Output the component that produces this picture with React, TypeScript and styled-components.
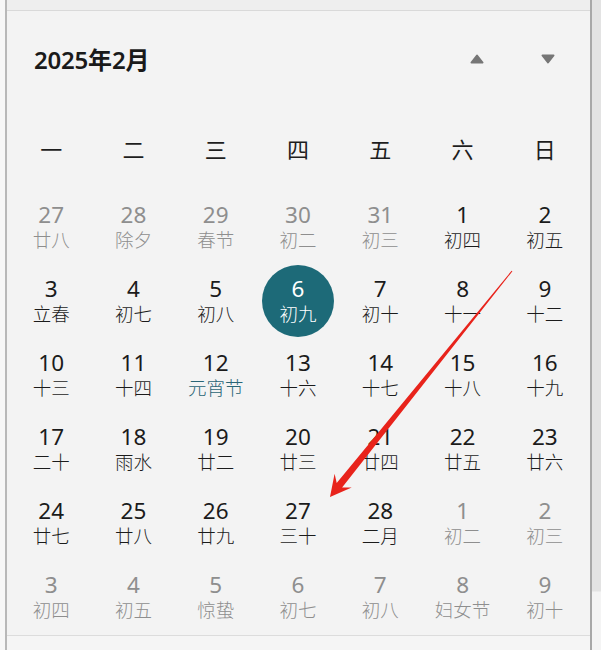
import React from "react";
import styled, { createGlobalStyle } from "styled-components";

const Global = createGlobalStyle`
  html, body { margin: 0; padding: 0; background: #f8f8f8; }
  body { font-family: "Noto Sans", "Noto Sans CJK SC", sans-serif; }
`;

const Page = styled.div`
  position: relative;
  width: 601px;
  height: 650px;
  display: flex;
  overflow: hidden;
`;

const Gutter = styled.div`
  width: 5px;
  flex: none;
  background: #f7f7f7;
`;

const Shade = styled.div`
  width: 9px;
  flex: none;
  background: linear-gradient(to bottom, #e3e3e3 0, #e3e3e3 591px, #f4f4f4 592px);
`;

const Panel = styled.div`
  width: 583px;
  flex: none;
  border-left: 2px solid #b8b8b8;
  border-right: 2px solid #a8a8a8;
  background: #f3f3f3;
  display: flex;
  flex-direction: column;
`;

const TopStrip = styled.div`
  height: 10px;
  background: #eeeeee;
  border-bottom: 1px solid #d9d9d9;
`;

const Header = styled.div`
  height: 95px;
  display: flex;
  align-items: center;
  padding-left: 27px;
`;

const Title = styled.div`
  font-size: 24px;
  font-weight: 600;
  color: #1a1a1a;
  flex: 1;
  letter-spacing: -0.2px;
`;

const NavButton = styled.div<{ $mr: number }>`
  width: 14px;
  height: 10px;
  margin-right: ${(p) => p.$mr}px;
  display: flex;
`;

const Grid = styled.div`
  display: grid;
  grid-template-columns: repeat(7, 1fr);
  width: 576px;
  margin-left: 3px;
`;

const WeekCell = styled.div`
  height: 84px;
  display: flex;
  align-items: center;
  justify-content: center;
  font-size: 22px;
  color: #1e1e1e;
`;

const DayCell = styled.div`
  height: 74px;
  display: flex;
  align-items: center;
  justify-content: center;
`;

const Day = styled.div<{ $tone: "cur" | "other" | "sel" }>`
  width: 72px;
  height: 72px;
  border-radius: 50%;
  display: flex;
  flex-direction: column;
  align-items: center;
  justify-content: center;
  background: ${(p) => (p.$tone === "sel" ? "#1d6a78" : "transparent")};
  color: ${(p) =>
    p.$tone === "sel" ? "#ffffff" : p.$tone === "other" ? "#8e8e8e" : "#1b1b1b"};
`;

const Num = styled.div`
  font-size: 22.5px;
  line-height: 25px;
  height: 25px;
`;

const Lunar = styled.div<{ $fest?: boolean }>`
  font-size: 18.5px;
  line-height: 25px;
  height: 25px;
  font-weight: 300;
  color: ${(p) => (p.$fest ? "#2a6576" : "inherit")};
`;

const BottomLine = styled.div`
  margin-top: 1px;
  border-top: 1px solid #dcdcdc;
  flex: 1;
  background: #f5f5f5;
`;

const ArrowLayer = styled.svg`
  position: absolute;
  left: 0;
  top: 0;
  pointer-events: none;
`;

type D = [string, string, number?];
// flag: 0 current, 1 other month, 2 selected, 3 festival
const rows: D[][] = [
  [["27", "廿八", 1], ["28", "除夕", 1], ["29", "春节", 1], ["30", "初二", 1], ["31", "初三", 1], ["1", "初四"], ["2", "初五"]],
  [["3", "立春"], ["4", "初七"], ["5", "初八"], ["6", "初九", 2], ["7", "初十"], ["8", "十一"], ["9", "十二"]],
  [["10", "十三"], ["11", "十四"], ["12", "元宵节", 3], ["13", "十六"], ["14", "十七"], ["15", "十八"], ["16", "十九"]],
  [["17", "二十"], ["18", "雨水"], ["19", "廿二"], ["20", "廿三"], ["21", "廿四"], ["22", "廿五"], ["23", "廿六"]],
  [["24", "廿七"], ["25", "廿八"], ["26", "廿九"], ["27", "三十"], ["28", "二月"], ["1", "初二", 1], ["2", "初三", 1]],
  [["3", "初四", 1], ["4", "初五", 1], ["5", "惊蛰", 1], ["6", "初七", 1], ["7", "初八", 1], ["8", "妇女节", 1], ["9", "初十", 1]],
];

const weeks = ["一", "二", "三", "四", "五", "六", "日"];

export default function App() {
  return (
    <Page>
      <Global />
      <Gutter />
      <Panel>
        <TopStrip />
        <Header>
          <Title>2025年2月</Title>
          <NavButton $mr={57}>
            <svg width="14" height="10" viewBox="0 0 14 10">
              <polygon points="7,1.5 12.5,8.5 1.5,8.5" fill="#767676" stroke="#767676" strokeWidth="2" strokeLinejoin="round" />
            </svg>
          </NavButton>
          <NavButton $mr={35}>
            <svg width="14" height="10" viewBox="0 0 14 10">
              <polygon points="1.5,1.5 12.5,1.5 7,8.5" fill="#767676" stroke="#767676" strokeWidth="2" strokeLinejoin="round" />
            </svg>
          </NavButton>
        </Header>
        <Grid>
          {weeks.map((w) => (
            <WeekCell key={w}>{w}</WeekCell>
          ))}
          {rows.flat().map((d, i) => {
            const f = d[2] ?? 0;
            const tone = f === 1 ? "other" : f === 2 ? "sel" : "cur";
            return (
              <DayCell key={i}>
                <Day $tone={tone}>
                  <Num>{d[0]}</Num>
                  <Lunar $fest={f === 3}>{d[1]}</Lunar>
                </Day>
              </DayCell>
            );
          })}
        </Grid>
        <BottomLine />
      </Panel>
      <Shade />
      <ArrowLayer width="601" height="650" viewBox="0 0 601 650">
        <polygon
          points="330,497 351.7,487.5 342.1,487.5 512.4,271.3 511.6,270.7 336.7,483.1 334.6,473.7"
          fill="#e8231b"
        />
      </ArrowLayer>
    </Page>
  );
}
